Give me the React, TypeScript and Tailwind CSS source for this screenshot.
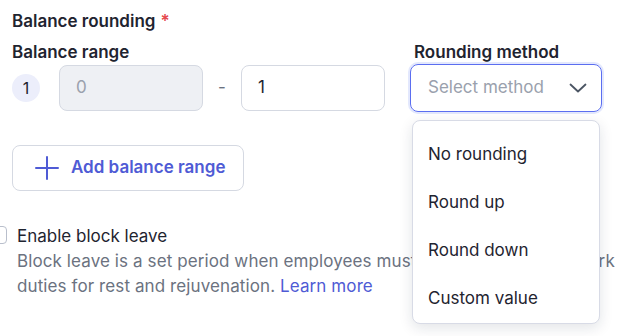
import React from 'react'

function Chevron() {
  return (
    <svg width="18" height="10" viewBox="0 0 18 10" fill="none" stroke="#4b5563" strokeWidth="1.8" strokeLinecap="round" strokeLinejoin="round">
      <path d="M1.5 1.5l7.5 7 7.5-7" />
    </svg>
  )
}

function Plus() {
  return (
    <svg width="24" height="24" viewBox="0 0 24 24" fill="none" stroke="#4f5bd5" strokeWidth="2" strokeLinecap="round">
      <path d="M12 1v22M1 12h22" />
    </svg>
  )
}

export default function App() {
  const options = ['No rounding', 'Round up', 'Round down', 'Custom value']
  return (
    <div className="h-[336px] w-[622px] overflow-hidden bg-white text-[17px] text-[#1f2430]" style={{ fontFamily: 'Inter, "Noto Sans", sans-serif' }}>
      <div className="relative pl-3 pt-[10px]">
        <div className="flex h-6 items-center font-semibold">
          Balance rounding <span className="ml-[5px] text-[#e5484d]">*</span>
        </div>
        <div className="mt-[7px] flex items-start">
          <div className="w-[398px]">
            <div className="flex h-6 items-center font-semibold">Balance range</div>
            <div className="flex items-center">
              <div className="flex h-7 w-7 items-center justify-center rounded-full bg-[#eceefb] text-[16px]">1</div>
              <div className="ml-[19px] flex h-[46px] w-[144px] items-center rounded-lg border border-[#d5d9e2] bg-[#eef0f4] px-4 text-[#9aa1ad]">0</div>
              <div className="flex w-[38px] justify-center text-[#6b7280]">-</div>
              <div className="flex h-[46px] w-[144px] items-center rounded-lg border border-[#d5d9e2] px-4">1</div>
            </div>
          </div>
          <div className="w-[192px]">
            <div className="flex h-6 items-center pl-1 font-semibold">Rounding method</div>
            <div className="-mt-[1px] flex h-[48px] items-center justify-between rounded-lg border-[1.5px] border-[#5b6ef0] px-4 pr-[14px] text-[#9aa1ad] shadow-[0_0_0_2px_#e3e8fd]">
              <span className="ml-[1px]">Select method</span>
              <Chevron />
            </div>
          </div>
        </div>

        <button className="mt-[33px] flex h-[46px] w-[232px] items-center gap-[12px] rounded-lg border border-[#d5d9e2] pl-[22px] font-semibold text-[#4f5bd5]">
          <Plus />
          Add balance range
        </button>

        <div className="mt-[34px] flex items-start">
          <div className="-ml-[23px] mt-[1px] h-[18px] w-[18px] shrink-0 rounded border border-[#b9bfcc]" />
          <div className="ml-[10px] w-[600px]">
            <div className="flex h-6 items-center">Enable block leave</div>
            <p className="whitespace-nowrap leading-[25px] tracking-[0.1px] text-[#6b7280]">
              Block leave is a set period when employees must step away from all work
              <br />
              duties for rest and rejuvenation. <span className="text-[#4f5bd5]">Learn more</span>
            </p>
          </div>
        </div>

        <div className="absolute left-[412px] top-[120px] w-[188px] rounded-lg border border-[#d8dbe6] bg-white pt-[10px] shadow-[0_4px_14px_rgba(20,30,60,0.12)]">
          {options.map((o) => (
            <div key={o} className="flex h-12 items-center px-[15px]">{o}</div>
          ))}
        </div>
      </div>
    </div>
  )
}
